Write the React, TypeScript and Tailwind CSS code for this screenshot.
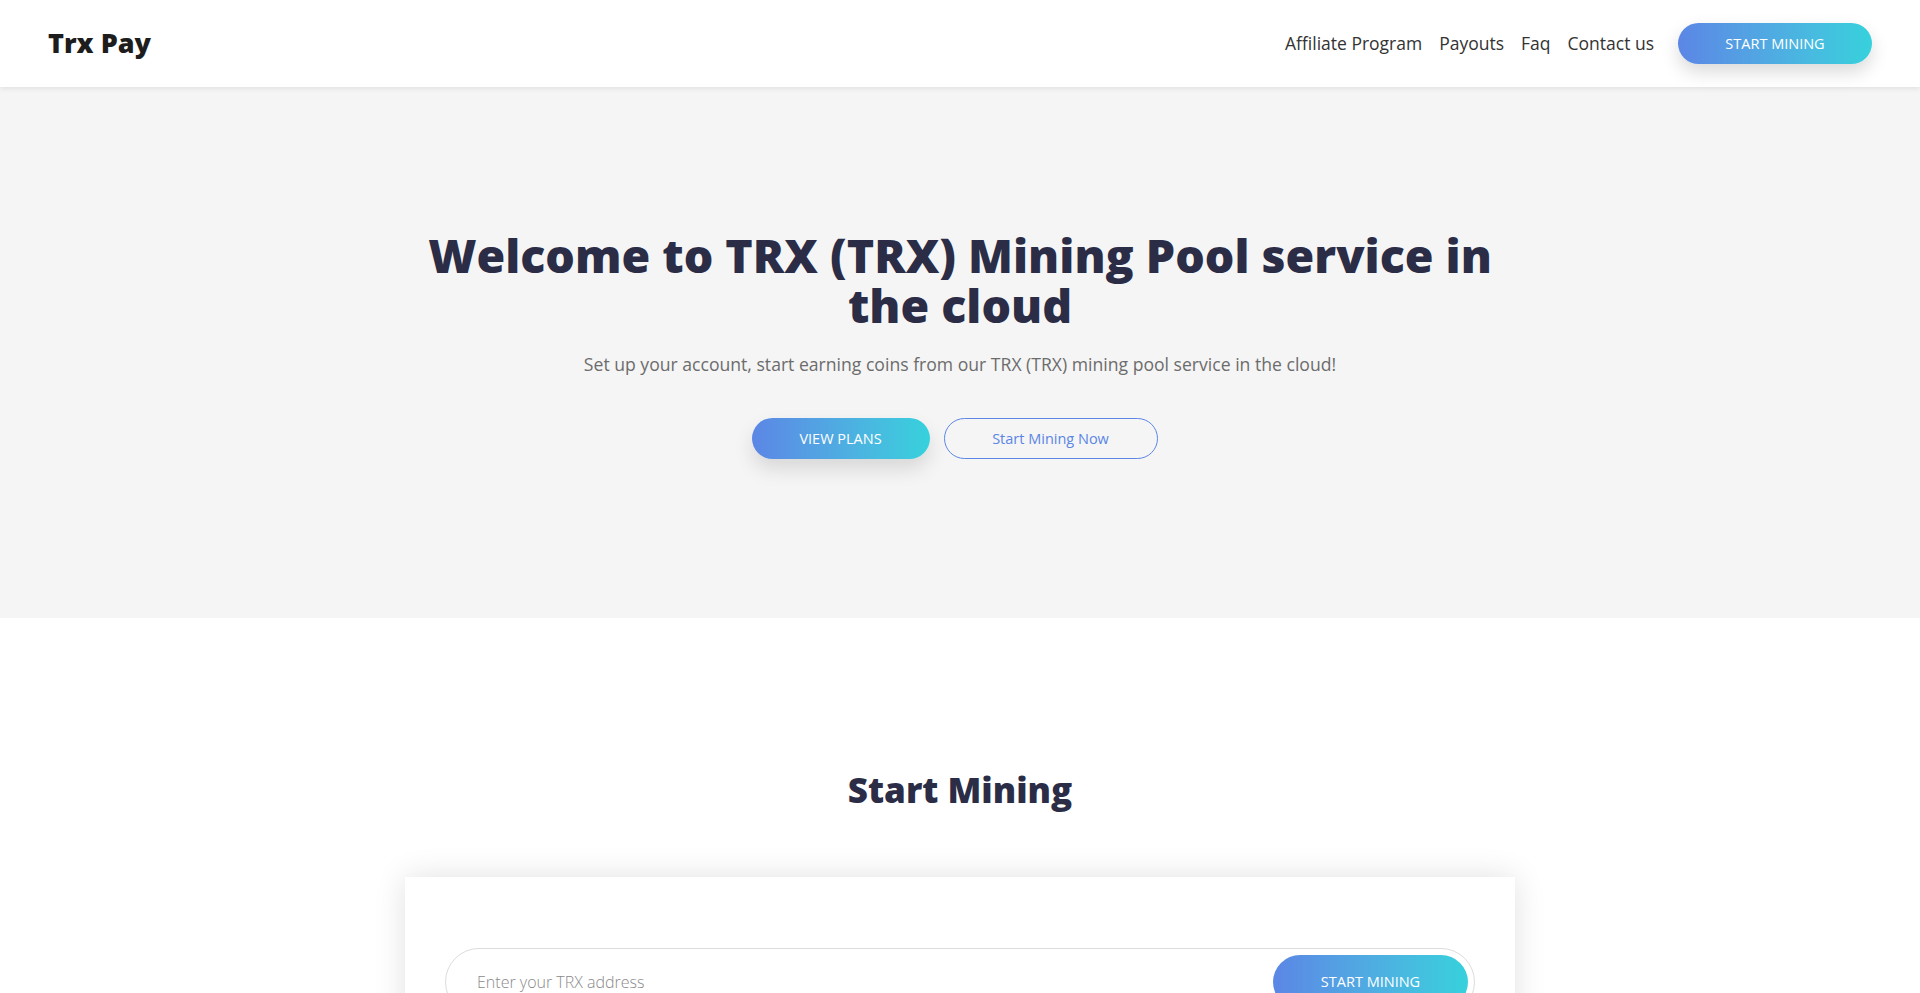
import React from 'react';

const font = { fontFamily: '"Open Sans", "Noto Sans", sans-serif' };

function Header() {
  return (
    <header className="relative z-10 flex h-[87px] items-center justify-between bg-white px-[48px] shadow-[0_2px_5px_rgba(0,0,0,0.08)]">
      <a href="#" className="text-[27px] font-extrabold text-[#1d1d1d]">Trx Pay</a>
      <nav className="flex items-center">
        <div className="flex items-center gap-[17px] text-[17.5px] text-[#333]">
          <a href="#">Affiliate Program</a>
          <a href="#">Payouts</a>
          <a href="#">Faq</a>
          <a href="#">Contact us</a>
        </div>
        <button className="ml-[24px] h-[41px] w-[194px] rounded-full bg-gradient-to-r from-[#5b86e5] to-[#36d1dc] text-[14.5px] uppercase text-white shadow-[0_8px_18px_rgba(0,0,0,0.15)]">
          Start Mining
        </button>
      </nav>
    </header>
  );
}

function Hero() {
  return (
    <section className="flex h-[531px] flex-col items-center bg-[#f5f5f5] pt-[143px] text-center">
      <h1 className="max-w-[1110px] text-[46.5px] font-extrabold leading-[50px] text-[#2b2d47]">
        Welcome to TRX (TRX) Mining Pool service in the cloud
      </h1>
      <p className="mt-[21px] text-[17.6px] leading-[27px] text-[#6c6c6c]">
        Set up your account, start earning coins from our TRX (TRX) mining pool service in the cloud!
      </p>
      <div className="mt-[40px] flex gap-[14px] pr-[11px]">
        <button className="h-[41px] w-[178px] rounded-full bg-gradient-to-r from-[#5b86e5] to-[#36d1dc] text-[14.5px] uppercase text-white shadow-[0_10px_20px_rgba(0,0,0,0.12)]">
          View plans
        </button>
        <button className="h-[41px] w-[214px] rounded-full border border-[#5b86e5] text-[14.5px] text-[#5b86e5]">
          Start Mining Now
        </button>
      </div>
    </section>
  );
}

function StartMining() {
  return (
    <section className="flex flex-col items-center bg-white pt-[151px] pb-[80px]">
      <h2 className="text-[35px] font-extrabold leading-[42px] text-[#2b2d47]">Start Mining</h2>
      <div className="mt-[66px] w-[1110px] bg-white px-[40px] pt-[71px] pb-[60px] shadow-[0_0_30px_rgba(0,0,0,0.12)]">
        <form className="flex h-[68px] items-center rounded-full border border-[#dcdcdc] pl-[31px] pr-[6px]" onSubmit={(e) => e.preventDefault()}>
          <input
            type="text"
            placeholder="Enter your TRX address"
            className="flex-1 bg-transparent text-[16px] font-light text-[#555] outline-none placeholder:text-[#8a8a8a]"
          />
          <button type="submit" className="h-[54px] w-[195px] rounded-full bg-gradient-to-r from-[#5b86e5] to-[#36d1dc] text-[14.5px] uppercase text-white">
            Start Mining
          </button>
        </form>
      </div>
    </section>
  );
}

export default function App() {
  return (
    <div style={font} className="min-h-screen bg-white">
      <Header />
      <Hero />
      <StartMining />
    </div>
  );
}
